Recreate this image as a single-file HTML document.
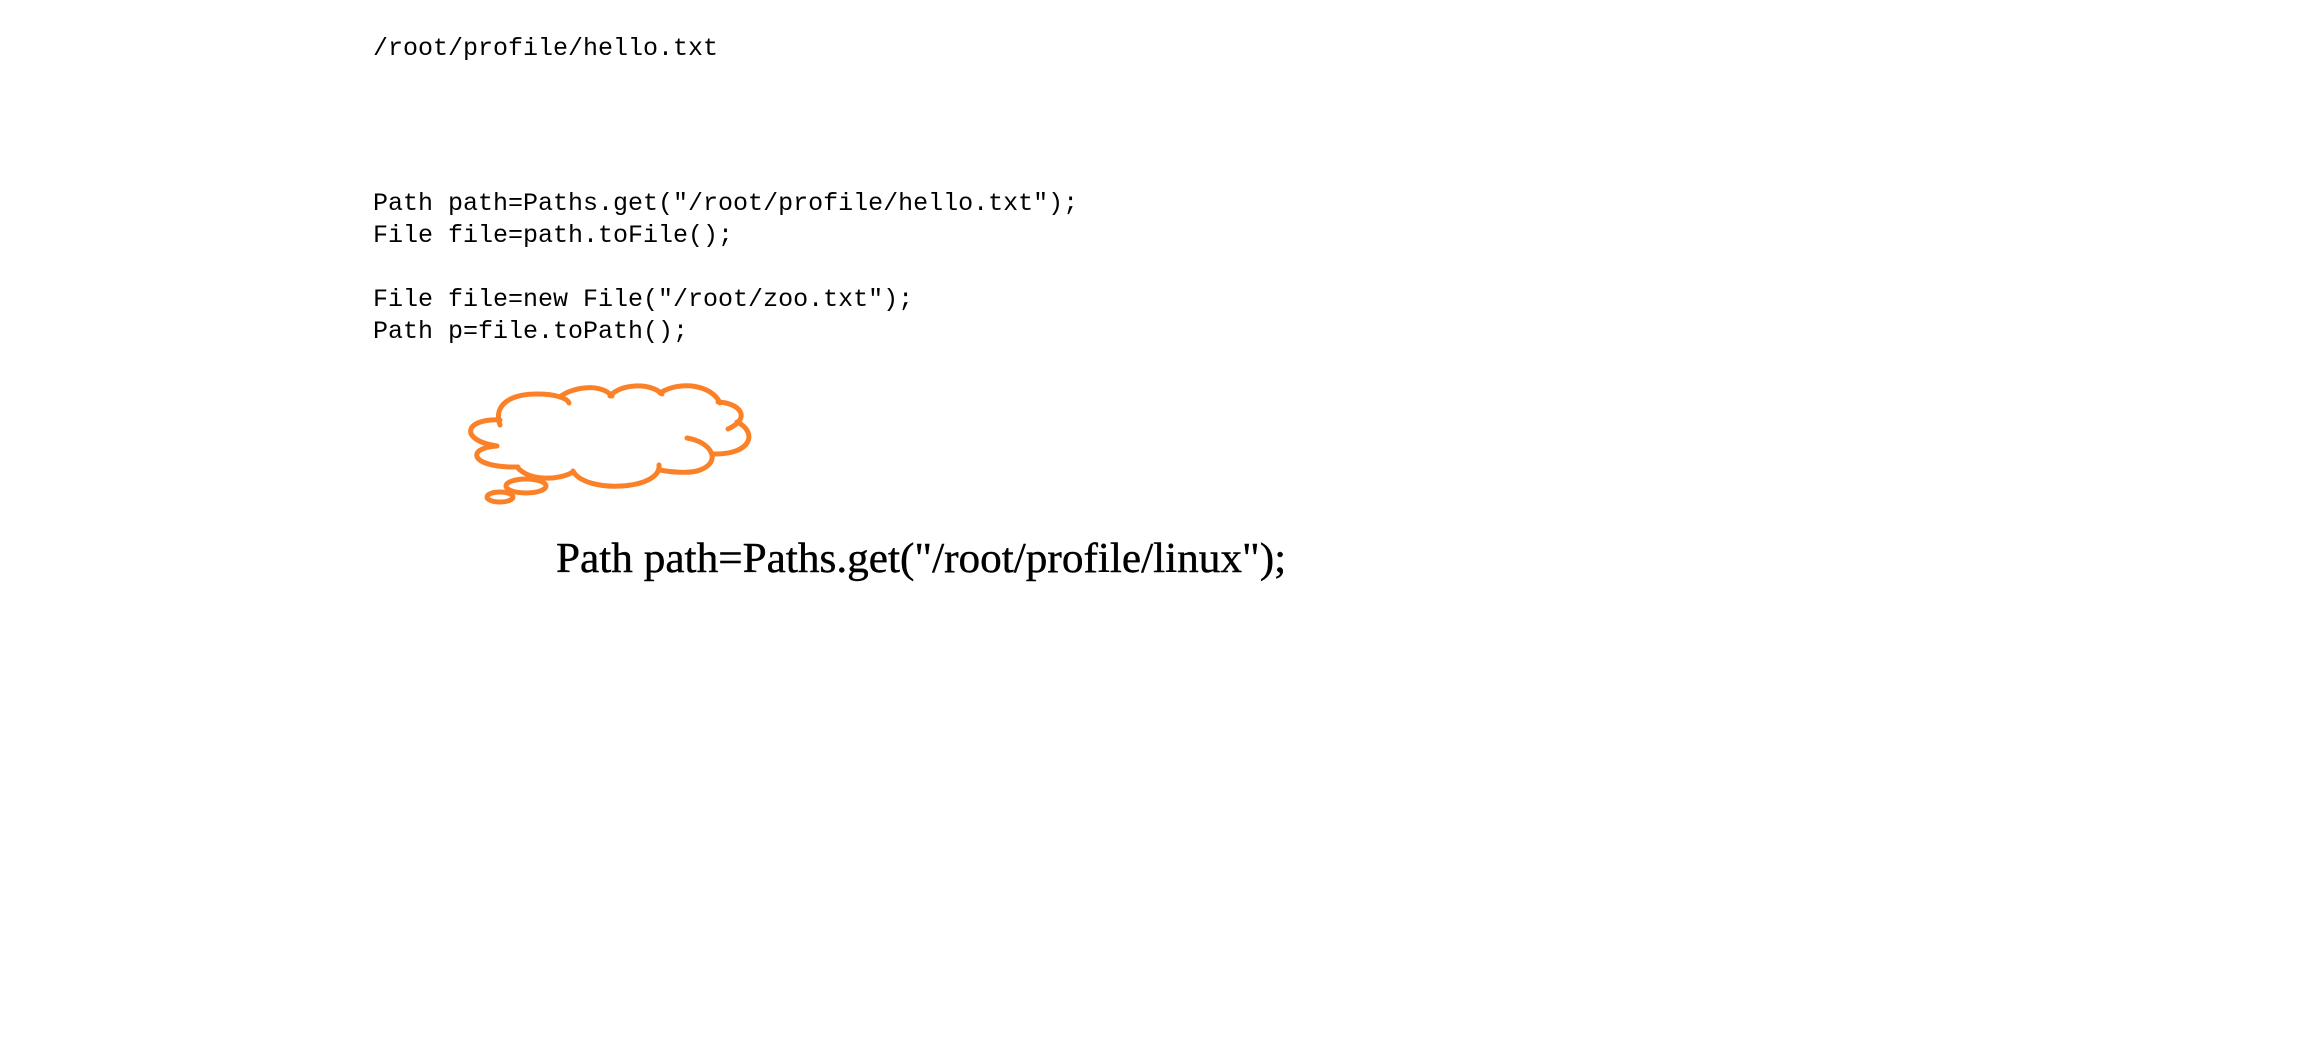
<!DOCTYPE html>
<html><head><meta charset="utf-8"><style>
html,body{margin:0;padding:0;background:#fff;width:2309px;height:1040px;overflow:hidden}
.m{position:absolute;left:373px;font-family:"Liberation Mono",monospace;font-size:25px;color:#000;white-space:pre;line-height:32px}
.s{position:absolute;left:556px;top:535px;font-family:"Liberation Serif",serif;font-size:42px;color:#000;white-space:pre;transform-origin:left top;transform:scaleX(1.03);-webkit-text-stroke:0.4px #000}
</style></head><body>
<div class="m" style="top:33px">/root/profile/hello.txt</div>
<div class="m" style="top:188px">Path path=Paths.get("/root/profile/hello.txt");
File file=path.toFile();

File file=new File("/root/zoo.txt");
Path p=file.toPath();</div>
<svg width="2309" height="1040" style="position:absolute;left:0;top:0" fill="none" stroke="#fb8128" stroke-width="5" stroke-linecap="round">
<path d="M500,425 C493,405 510,394 537,394 C555,394 567,398 569,403"/>
<path d="M560,397 C570,388 600,382 612,396"/>
<path d="M610,396 C620,384 650,382 662,394"/>
<path d="M660,393 C680,380 712,385 720,403"/>
<path d="M718,402 C740,403 752,418 728,429"/>
<path d="M737,422 C758,432 752,455 713,454"/>
<path d="M687,438 C712,442 722,462 700,470 C690,474 670,472 660,470"/>
<path d="M659,465 C662,490 585,494 573,471"/>
<path d="M573,472 C560,480 530,482 517,467"/>
<path d="M518,467 C470,468 465,448 497,446"/>
<path d="M500,420 C465,418 458,440 497,446"/>
<ellipse cx="526" cy="486" rx="20" ry="7"/>
<ellipse cx="500" cy="497" rx="13" ry="5"/>
</svg>
<div class="s">Path path=Paths.get("/root/profile/linux");</div>
</body></html>
